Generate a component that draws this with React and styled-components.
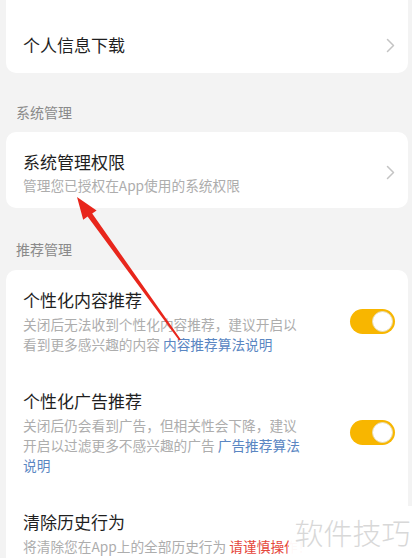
import React from "react";
import styled, { createGlobalStyle } from "styled-components";

const Global = createGlobalStyle`
  html, body { margin: 0; padding: 0; background: #f3f3f3; }
  body { font-family: "Noto Sans CJK SC", "Noto Sans", sans-serif; }
  * { box-sizing: border-box; }
`;

const Page = styled.div`
  position: relative;
  width: 412px;
  height: 558px;
  overflow: hidden;
  background: #f3f3f3;
  display: flex;
  flex-direction: column;
`;

const Card = styled.div`
  margin: 0 4px 0 6px;
  background: #ffffff;
  border-radius: ${(p) => (p.$cut ? "0 0 10px 10px" : "10px")};
  padding: 0 13px 0 17px;
  display: flex;
  flex-direction: column;
`;

const Row = styled.div`
  display: flex;
  align-items: center;
  justify-content: space-between;
  padding: ${(p) => p.$pad || "18px 0 17px"};
`;

const TextBlock = styled.div`
  display: flex;
  flex-direction: column;
`;

const Title = styled.div`
  font-size: 17px;
  line-height: 24px;
  color: #1f1f1f;
`;

const Sub = styled.div`
  margin-top: ${(p) => p.$mt || "2px"};
  font-size: 13.7px;
  line-height: 20px;
  color: #adadad;
  white-space: nowrap;
`;

const Link = styled.span`
  color: ${(p) => (p.$warn ? "#e5473c" : "#5a86c2")};
`;

const SectionTitle = styled.div`
  padding: ${(p) => p.$pad};
  font-size: 14px;
  line-height: 20px;
  color: #8a8a8a;
`;

const Toggle = styled.div`
  position: relative;
  flex: none;
  width: 45px;
  height: 25px;
  border-radius: 13px;
  background: #f8b600;
  display: flex;
  align-items: center;
  justify-content: flex-end;
  padding: 0 2px;
`;

const Knob = styled.div`
  width: 21px;
  height: 21px;
  border-radius: 50%;
  background: #ffffff;
  border: 1px solid #e6dcb4;
`;

const Overlay = styled.svg`
  position: absolute;
  left: 0;
  top: 0;
  pointer-events: none;
`;

const Watermark = styled.div`
  position: absolute;
  left: 289px;
  top: 506px;
  width: 123px;
  height: 52px;
  background: rgba(255, 255, 255, 0.96);
  display: flex;
  align-items: center;
  justify-content: center;
  font-size: 29px;
  font-weight: 300;
  color: #d8d8d8;
  padding-left: 4px;
`;

const Chevron = () => (
  <svg width="9" height="15" viewBox="0 0 9 15" fill="none">
    <path d="M1.5 1.5 L7.5 7.5 L1.5 13.5" stroke="#c4c4c4" strokeWidth="1.5" strokeLinecap="round" strokeLinejoin="round" />
  </svg>
);

const Switch = () => (
  <Toggle>
    <Knob />
  </Toggle>
);

export default function App() {
  return (
    <>
      <Global />
      <Page>
        <Card $cut>
          <Row $pad="33px 0 16px">
            <Title>个人信息下载</Title>
            <Chevron />
          </Row>
        </Card>
        <SectionTitle $pad="29px 16px 10px">系统管理</SectionTitle>
        <Card>
          <Row $pad="18px 0 13px">
            <TextBlock>
              <Title>系统管理权限</Title>
              <Sub $mt="1px">管理您已授权在App使用的系统权限</Sub>
            </TextBlock>
            <Chevron />
          </Row>
        </Card>
        <SectionTitle $pad="31px 16px 11px">推荐管理</SectionTitle>
        <Card>
          <Row>
            <TextBlock>
              <Title>个性化内容推荐</Title>
              <Sub>
                关闭后无法收到个性化内容推荐，建议开启以
                <br />
                看到更多感兴趣的内容 <Link>内容推荐算法说明</Link>
              </Sub>
            </TextBlock>
            <Switch />
          </Row>
          <Row>
            <TextBlock>
              <Title>个性化广告推荐</Title>
              <Sub>
                关闭后仍会看到广告，但相关性会下降，建议
                <br />
                开启以过滤更多不感兴趣的广告 <Link>广告推荐算法</Link>
                <br />
                <Link>说明</Link>
              </Sub>
            </TextBlock>
            <Switch />
          </Row>
          <Row>
            <TextBlock>
              <Title>清除历史行为</Title>
              <Sub>
                将清除您在App上的全部历史行为 <Link $warn>请谨慎操作！</Link>
              </Sub>
            </TextBlock>
          </Row>
        </Card>
        <Overlay width="412" height="558" viewBox="0 0 412 558">
          <polygon
            points="77,197 96.6,210.4 92.2,213.6 180.8,339.5 179.2,340.5 87.6,216.6 83.2,219.8"
            fill="#e8261c"
          />
        </Overlay>
        <Watermark>软件技巧</Watermark>
      </Page>
    </>
  );
}
